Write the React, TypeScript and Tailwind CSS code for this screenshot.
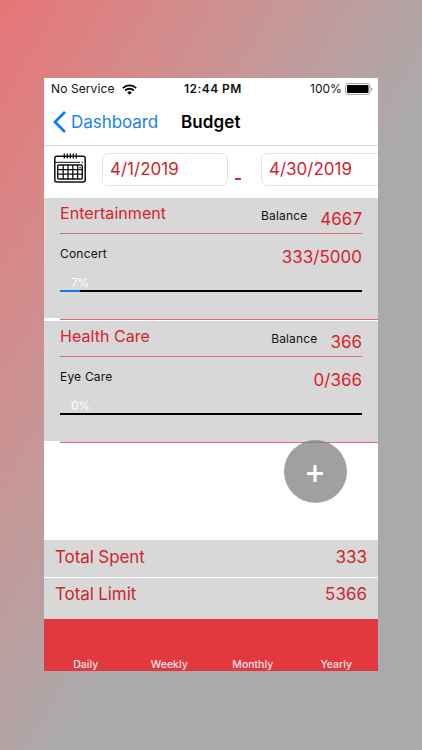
interface BudgetCategory {
  name: string;
  balance: number;
  item: string;
  spent: number;
  limit: number;
}

const categories: BudgetCategory[] = [
  { name: 'Entertainment', balance: 4667, item: 'Concert', spent: 333, limit: 5000 },
  { name: 'Health Care', balance: 366, item: 'Eye Care', spent: 0, limit: 366 },
];

const periods = ['Daily', 'Weekly', 'Monthly', 'Yearly'];

function WifiIcon() {
  return (
    <svg width="15" height="11" viewBox="0 0 15 11" fill="none" stroke="#000" strokeWidth="1.9">
      <path d="M0.9 4.1a9.4 9.4 0 0 1 13.2 0" />
      <path d="M3.2 6.5a6.1 6.1 0 0 1 8.6 0" />
      <path d="M7.5 10.8 5.2 8.4a3.3 3.3 0 0 1 4.6 0Z" fill="#000" stroke="none" />
    </svg>
  );
}

function BatteryIcon() {
  return (
    <svg width="28" height="12" viewBox="0 0 28 12">
      <rect x="0.5" y="0.5" width="24.5" height="11" rx="2.6" fill="#fff" stroke="#a3a3a3" />
      <rect x="2" y="2" width="21.5" height="8" rx="1" fill="#000" />
      <path d="M26.2 4.2c1.4.5 1.4 3.1 0 3.6Z" fill="#8c8c8c" />
    </svg>
  );
}

function CalendarIcon() {
  return (
    <svg width="32" height="30" viewBox="0 0 32 30" fill="none" stroke="#111">
      <rect x="0.8" y="3.2" width="30.4" height="25.8" rx="2" strokeWidth="1.5" />
      <path d="M1 9.3h25M27.5 9.3h1.5" strokeWidth="1" />
      <path d="M10.3 0.5v5M13.3 0.5v5M16.3 0.5v5M19.3 0.5v5M22.3 0.5v5" strokeWidth="1.3" />
      <rect x="3.7" y="12" width="24.6" height="14" rx="1.2" strokeWidth="1.4" />
      <path d="M3.7 16.6h24.6M3.7 21.2h24.6M9.2 12v14M14 12v14M18.8 12v14M23.6 12v14" strokeWidth="1.3" />
      <path d="M25.4 14.6h1.4" strokeWidth="1.4" />
    </svg>
  );
}

function CategoryCard({ category }: { category: BudgetCategory }) {
  const percent = Math.round((category.spent / category.limit) * 100);

  return (
    <div>
      <div className="h-[120px] bg-[#d8d8d8] pl-4 pr-4">
        <div className="flex h-[36px] items-start justify-between border-b border-[#dc7076]">
          <span className="mt-[5px] text-[16px] leading-5 tracking-[0.05px] text-[#d8232a]">{category.name}</span>
          <div className="flex items-start">
            <span className="mt-[8px] text-[12px] leading-5 tracking-[0.15px] text-[#111]">Balance</span>
            <span className="ml-[13px] mt-[11px] text-[17px] leading-5 text-[#d8232a]">{category.balance}</span>
          </div>
        </div>
        <div className="flex h-[39px] items-start justify-between">
          <span className="mt-[10px] text-[12px] leading-5 tracking-[0.2px] text-[#111]">{category.item}</span>
          <span className="mt-[13px] text-[17px] leading-5 text-[#d8232a]">
            {category.spent}/{category.limit}
          </span>
        </div>
        <div className="h-[17px] pl-[11px] text-[12px] leading-5 tracking-[-0.3px] text-white">{percent}%</div>
        <div className="h-[2px] bg-black">
          <div className="h-full bg-[#1679e8]" style={{ width: `${percent * 0.95}%` }} />
        </div>
      </div>
      <div className="h-[3px] bg-white">
        <div className="ml-4 h-[2px] border-b border-[#dc6a70] bg-[#e2d3d4]" />
      </div>
    </div>
  );
}

export default function App() {
  return (
    <div className="h-[750px] w-[422px] bg-linear-to-br from-[#e77477] to-[#a9aaac] to-58% px-[44px] pt-[78px] font-['Inter',sans-serif]">
      <div className="relative flex h-[593px] w-[334px] flex-col overflow-hidden bg-white">
        {/* Status bar */}
        <div className="grid h-[22px] shrink-0 grid-cols-[133px_1fr_68px] items-center pl-[7px] text-[12px] text-[#111]">
          <div className="flex items-center gap-[7px]">
            <span className="tracking-[0.1px]">No Service</span>
            <WifiIcon />
          </div>
          <span className="font-semibold tracking-[0.45px]">12:44 PM</span>
          <div className="flex items-center gap-[3px]">
            <span>100%</span>
            <BatteryIcon />
          </div>
        </div>

        {/* Navigation */}
        <div className="flex h-[46px] shrink-0 items-center border-b border-[#d9d9d9] pl-[9px]">
          <svg width="13" height="22" viewBox="0 0 13 22" className="mb-[2px]" fill="none" stroke="#0f7bf5" strokeWidth="2.8">
            <path d="M12 1 2 11l10 10" />
          </svg>
          <span className="ml-[5px] w-[110px] text-[17px] tracking-[-0.05px] text-[#1b80f0]">Dashboard</span>
          <span className="text-[17px] font-semibold tracking-[0.1px] text-black">Budget</span>
        </div>

        {/* Date range */}
        <div className="flex h-[52px] shrink-0 items-start pl-[10px]">
          <div className="mt-[7px] shrink-0">
            <CalendarIcon />
          </div>
          <div className="ml-[16px] mt-[7px] h-[33px] w-[126px] shrink-0 rounded-[6px] border border-[#e3e3e3] pl-[7px] text-[17px] leading-[30px] text-[#d0242b]">
            4/1/2019
          </div>
          <div className="ml-[7px] mt-[32px] h-[1.5px] w-[6px] shrink-0 bg-[#d8232a]" />
          <div className="ml-[20px] mt-[7px] h-[33px] w-[126px] shrink-0 rounded-[6px] border border-[#e3e3e3] pl-[7px] text-[17px] leading-[30px] text-[#d0242b]">
            4/30/2019
          </div>
        </div>

        <div className="min-h-0 flex-1">
          {categories.map((category) => (
            <CategoryCard key={category.name} category={category} />
          ))}
        </div>

        {/* Totals */}
        <div className="flex h-[38px] shrink-0 items-start justify-between border-b border-white bg-[#d8d8d8] pl-[11px] pr-[11px] pt-[7px] text-[17px] leading-5 text-[#d0242b]">
          <span className="tracking-[-0.1px]">Total Spent</span>
          <span>333</span>
        </div>
        <div className="flex h-[41px] shrink-0 items-start justify-between bg-[#d8d8d8] pl-[11px] pr-[11px] pt-[6px] text-[17px] leading-5 text-[#d0242b]">
          <span className="tracking-[-0.1px]">Total Limit</span>
          <span>5366</span>
        </div>

        {/* Period tabs */}
        <div className="grid h-[52px] shrink-0 grid-cols-4 items-end bg-[#e1393f] text-center text-[10.5px] font-medium leading-[13px] text-[#fbe3e3]">
          {periods.map((period) => (
            <span key={period}>{period}</span>
          ))}
        </div>

        {/* Floating add button */}
        <button className="absolute left-[240px] top-[362px] flex h-[63px] w-[63px] items-center justify-center rounded-full bg-[#808082]/75">
          <svg width="16" height="17" viewBox="0 0 16 17" className="mr-px mt-[4px]" stroke="#fff" strokeWidth="3.2">
            <path d="M8 0v17M0 8.5h16" />
          </svg>
        </button>
      </div>
    </div>
  );
}
